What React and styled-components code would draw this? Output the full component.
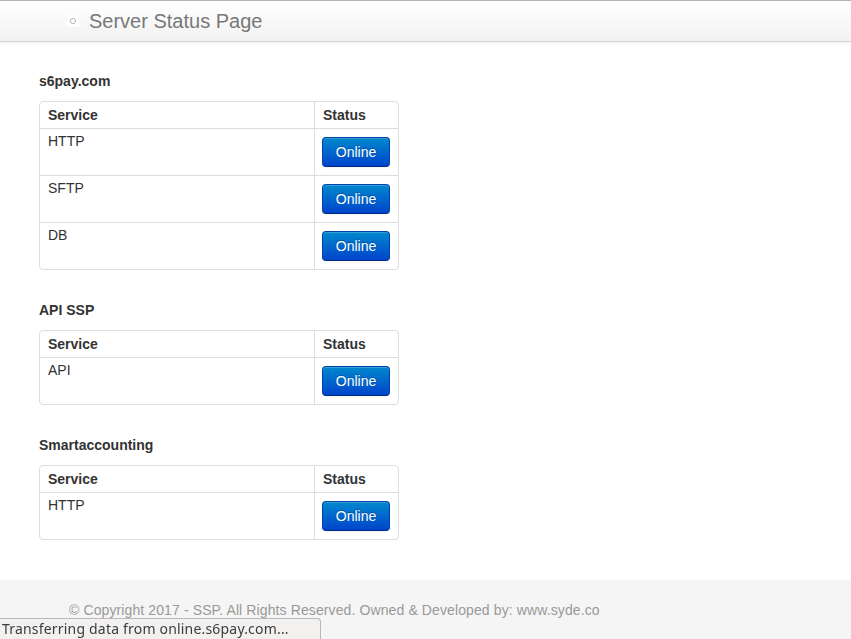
import React from "react";
import styled, { createGlobalStyle } from "styled-components";

const Global = createGlobalStyle`
  html, body { margin: 0; padding: 0; background: #fff; }
  body {
    font-family: "Liberation Sans", Arial, sans-serif;
    font-size: 14px;
    line-height: 20px;
    color: #333;
  }
`;

const Page = styled.div`
  min-height: 639px;
  display: flex;
  flex-direction: column;
`;

const Navbar = styled.header`
  height: 40px;
  border-top: 1px solid #b4b2ad;
  border-bottom: 1px solid #d4d4d4;
  background: linear-gradient(to bottom, #ffffff, #f2f2f2);
  box-shadow: 0 1px 4px rgba(0, 0, 0, 0.065);
  display: flex;
  align-items: center;
  padding-left: 67px;
  gap: 10px;
`;

const BrokenIcon = styled.span`
  width: 12px;
  height: 12px;
  display: inline-flex;
  align-items: center;
  justify-content: center;
  background: #fff;
`;

const Brand = styled.span`
  font-size: 20px;
  line-height: 20px;
  color: #777;
`;

const Main = styled.main`
  flex: 1;
  padding: 29px 39px 40px;
`;

const Section = styled.section`
  & + & {
    margin-top: 30px;
  }
`;

const Heading = styled.h4`
  margin: 0 0 10px;
  font-size: 14px;
  line-height: 20px;
  font-weight: bold;
  color: #333;
`;

const Table = styled.table`
  width: 360px;
  table-layout: fixed;
  border-collapse: separate;
  border-spacing: 0;
  border: 1px solid #ddd;
  border-radius: 4px;
`;

const Th = styled.th`
  text-align: left;
  font-weight: bold;
  padding: 3px 8px;
  line-height: 20px;
  border-left: ${(p) => (p.$first ? "none" : "1px solid #ddd")};
  width: ${(p) => (p.$first ? "258px" : "auto")};
`;

const Td = styled.td`
  vertical-align: top;
  padding: ${(p) => (p.$status ? "8px 8px 8px 7px" : "2px 8px")};
  line-height: 20px;
  border-top: 1px solid #ddd;
  border-left: ${(p) => (p.$status ? "1px solid #ddd" : "none")};
`;

const Button = styled.button`
  display: block;
  width: 68px;
  height: 30px;
  padding: 0;
  border: 1px solid #0044aa;
  border-bottom-color: #002a80;
  border-radius: 4px;
  background: linear-gradient(to bottom, #0088cc, #0044cc);
  color: #fff;
  font-family: "Liberation Sans", Arial, sans-serif;
  font-size: 14px;
  line-height: 20px;
  text-shadow: 0 -1px 0 rgba(0, 0, 0, 0.25);
  box-shadow: inset 0 1px 0 rgba(255, 255, 255, 0.2), 0 1px 2px rgba(0, 0, 0, 0.05);
`;

const Footer = styled.footer`
  background: #f5f5f5;
  padding: 20px 0 30px 69px;
  color: #999;
  font-size: 14px;
  line-height: 20px;
  letter-spacing: 0.11px;
`;

const StatusBar = styled.div`
  position: fixed;
  left: 0;
  bottom: 0;
  width: 318px;
  height: 20px;
  border: 1px solid #b8b8b8;
  border-left: none;
  border-bottom: none;
  border-top-right-radius: 4px;
  background: #f2f1f0;
  font-family: "Noto Sans", "DejaVu Sans", sans-serif;
  font-size: 14px;
  line-height: 20px;
  letter-spacing: 0.19px;
  color: #3c3c3c;
  padding-left: 2px;
  white-space: nowrap;
`;

const data = [
  { name: "s6pay.com", services: ["HTTP", "SFTP", "DB"] },
  { name: "API SSP", services: ["API"] },
  { name: "Smartaccounting", services: ["HTTP"] },
];

export default function App() {
  return (
    <>
      <Global />
      <Page>
        <Navbar>
          <BrokenIcon>
            <svg width="8" height="8" viewBox="0 0 8 8">
              <circle cx="4" cy="4" r="2.6" fill="none" stroke="#b8b8b8" strokeWidth="1" />
            </svg>
          </BrokenIcon>
          <Brand>Server Status Page</Brand>
        </Navbar>
        <Main>
          {data.map((s) => (
            <Section key={s.name}>
              <Heading>{s.name}</Heading>
              <Table>
                <thead>
                  <tr>
                    <Th $first>Service</Th>
                    <Th>Status</Th>
                  </tr>
                </thead>
                <tbody>
                  {s.services.map((svc) => (
                    <tr key={svc}>
                      <Td>{svc}</Td>
                      <Td $status>
                        <Button>Online</Button>
                      </Td>
                    </tr>
                  ))}
                </tbody>
              </Table>
            </Section>
          ))}
        </Main>
        <Footer>© Copyright 2017 - SSP. All Rights Reserved. Owned &amp; Developed by: www.syde.co</Footer>
      </Page>
      <StatusBar>Transferring data from online.s6pay.com...</StatusBar>
    </>
  );
}
